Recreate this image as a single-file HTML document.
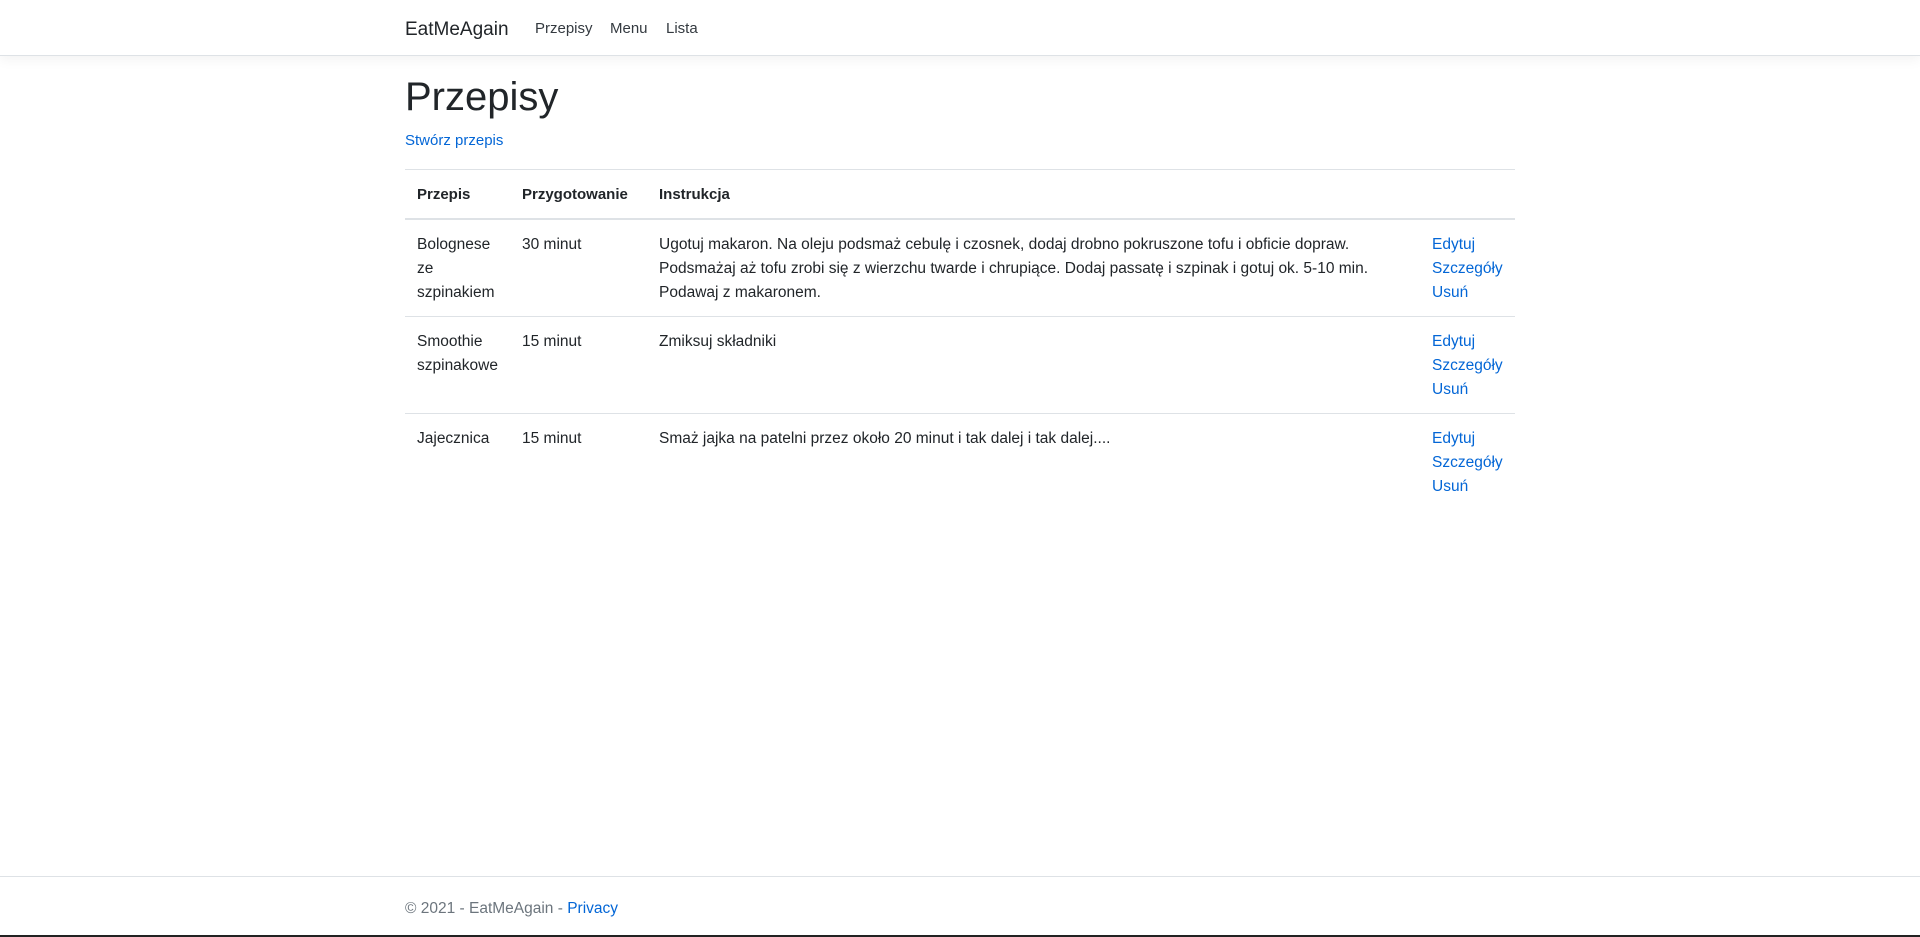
<!DOCTYPE html>
<html><head><meta charset="utf-8"><style>
*{box-sizing:border-box}
body{margin:0;font-family:"Liberation Sans",sans-serif;font-size:15px;line-height:24px;color:#212529;background:#fff;height:937px;position:relative;overflow:hidden}
a{color:#0366d6;text-decoration:none}
.nav{height:56px;border-bottom:1px solid #dee2e6;box-shadow:0 .25rem .75rem rgba(0,0,0,.05);background:#fff}
.c{width:1110px;margin:0 auto;position:relative}
.brand{position:absolute;left:0;top:15px;font-size:19px;line-height:30px;color:#212529}
.nl{position:absolute;top:17px;font-size:15px;color:#343a40}
h1{margin:17px 0 8px;font-size:40px;line-height:48px;font-weight:500}
p{margin:0 0 16px}
table{width:1110px;border-collapse:collapse;table-layout:fixed}
th,td{padding:12px;vertical-align:top;text-align:left;border-top:1px solid #dee2e6;white-space:nowrap}
th{font-weight:bold;border-bottom:2px solid #dee2e6;padding-top:13px;padding-bottom:11px;font-size:15px}
td{font-size:15.5px;padding-top:13px;padding-bottom:11px}
.foot{position:absolute;left:0;right:0;top:876px;border-top:1px solid #dee2e6;height:59px;color:#6c757d}
.foot .c{padding-top:20px;font-size:15.5px}
.bar{position:absolute;left:0;right:0;bottom:0;height:2px;background:#222}
</style></head><body>
<div class="nav"><div class="c">
<span class="brand">EatMeAgain</span>
<span class="nl" style="left:130px">Przepisy</span>
<span class="nl" style="left:205px">Menu</span>
<span class="nl" style="left:261px">Lista</span>
</div></div>
<div class="c">
<h1>Przepisy</h1>
<p><a>Stwórz przepis</a></p>
<table>
<colgroup><col style="width:105px"><col style="width:137px"><col style="width:773px"><col></colgroup>
<tr><th>Przepis</th><th>Przygotowanie</th><th>Instrukcja</th><th></th></tr>
<tr><td>Bolognese<br>ze<br>szpinakiem</td><td>30 minut</td><td>Ugotuj makaron. Na oleju podsmaż cebulę i czosnek, dodaj drobno pokruszone tofu i obficie dopraw.<br>Podsmażaj aż tofu zrobi się z wierzchu twarde i chrupiące. Dodaj passatę i szpinak i gotuj ok. 5-10 min.<br>Podawaj z makaronem.</td><td><a>Edytuj</a><br><a>Szczegóły</a><br><a>Usuń</a></td></tr>
<tr><td>Smoothie<br>szpinakowe</td><td>15 minut</td><td>Zmiksuj składniki</td><td><a>Edytuj</a><br><a>Szczegóły</a><br><a>Usuń</a></td></tr>
<tr><td>Jajecznica</td><td>15 minut</td><td>Smaż jajka na patelni przez około 20 minut i tak dalej i tak dalej....</td><td><a>Edytuj</a><br><a>Szczegóły</a><br><a>Usuń</a></td></tr>
</table>
</div>
<div class="foot"><div class="c">© 2021 - EatMeAgain - <a>Privacy</a></div></div>
<div class="bar"></div>
</body></html>
